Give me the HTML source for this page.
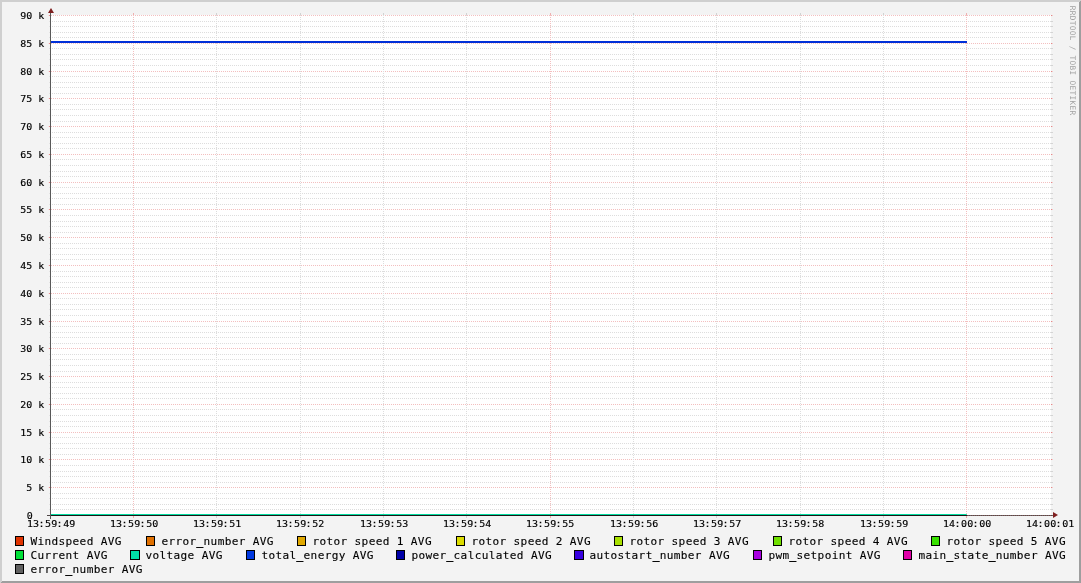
<!DOCTYPE html>
<html><head><meta charset="utf-8"><title>RRDtool graph</title>
<style>
html,body{margin:0;padding:0;background:#f3f3f3;overflow:hidden}
svg{display:block;position:absolute;left:0;top:0;will-change:transform}
text{font-family:"DejaVu Sans Mono","Liberation Mono",monospace;fill:#000;white-space:pre;stroke:#000;stroke-width:0.12px}
.ax{font-size:9.33px;stroke-width:0.15px}
.lg{font-size:11.1px;letter-spacing:0.352px}
.us{stroke-width:0.55px}
.wm{font-size:7.7px;letter-spacing:0.364px;fill:#a0a0a0;stroke:none}
</style></head><body>
<svg width="1081" height="583" viewBox="0 0 1081 583">
<rect x="0" y="0" width="1081" height="583" fill="#f3f3f3"/>
<g shape-rendering="crispEdges">
<polygon points="0,0 1081,0 1079,2 2,2 2,581 0,583" fill="#cfcfcf"/>
<polygon points="1081,0 1081,583 0,583 2,581 1079,581 1079,2" fill="#9e9e9e"/>
<rect x="51" y="15" width="1000" height="501" fill="#ffffff"/>
<rect x="49" y="515" width="1" height="1" fill="#e88c8c"/>
<rect x="48" y="515" width="1" height="1" fill="#f1e4e4"/>
<rect x="1051" y="515" width="1" height="1" fill="#e68888"/>
<rect x="1052" y="515" width="1" height="1" fill="#f0cccc"/>
<line x1="51" y1="515.5" x2="1051" y2="515.5" stroke="#f3bfbf" stroke-width="1" stroke-dasharray="1 1"/>
<rect x="49" y="509" width="1" height="1" fill="#e2e2e2"/>
<rect x="1051" y="509" width="2" height="1" fill="#d4d4d4"/>
<line x1="52" y1="509.5" x2="1051" y2="509.5" stroke="#dddddd" stroke-width="1" stroke-dasharray="1 1"/>
<rect x="49" y="504" width="1" height="1" fill="#e2e2e2"/>
<rect x="1051" y="504" width="2" height="1" fill="#d4d4d4"/>
<line x1="52" y1="504.5" x2="1051" y2="504.5" stroke="#dddddd" stroke-width="1" stroke-dasharray="1 1"/>
<rect x="49" y="498" width="1" height="1" fill="#e2e2e2"/>
<rect x="1051" y="498" width="2" height="1" fill="#d4d4d4"/>
<line x1="52" y1="498.5" x2="1051" y2="498.5" stroke="#dddddd" stroke-width="1" stroke-dasharray="1 1"/>
<rect x="49" y="493" width="1" height="1" fill="#e2e2e2"/>
<rect x="1051" y="493" width="2" height="1" fill="#d4d4d4"/>
<line x1="52" y1="493.5" x2="1051" y2="493.5" stroke="#dddddd" stroke-width="1" stroke-dasharray="1 1"/>
<rect x="49" y="487" width="1" height="1" fill="#e88c8c"/>
<rect x="48" y="487" width="1" height="1" fill="#f1e4e4"/>
<rect x="1051" y="487" width="1" height="1" fill="#e68888"/>
<rect x="1052" y="487" width="1" height="1" fill="#f0cccc"/>
<line x1="51" y1="487.5" x2="1051" y2="487.5" stroke="#f3bfbf" stroke-width="1" stroke-dasharray="1 1"/>
<rect x="49" y="482" width="1" height="1" fill="#e2e2e2"/>
<rect x="1051" y="482" width="2" height="1" fill="#d4d4d4"/>
<line x1="52" y1="482.5" x2="1051" y2="482.5" stroke="#dddddd" stroke-width="1" stroke-dasharray="1 1"/>
<rect x="49" y="476" width="1" height="1" fill="#e2e2e2"/>
<rect x="1051" y="476" width="2" height="1" fill="#d4d4d4"/>
<line x1="52" y1="476.5" x2="1051" y2="476.5" stroke="#dddddd" stroke-width="1" stroke-dasharray="1 1"/>
<rect x="49" y="471" width="1" height="1" fill="#e2e2e2"/>
<rect x="1051" y="471" width="2" height="1" fill="#d4d4d4"/>
<line x1="52" y1="471.5" x2="1051" y2="471.5" stroke="#dddddd" stroke-width="1" stroke-dasharray="1 1"/>
<rect x="49" y="465" width="1" height="1" fill="#e2e2e2"/>
<rect x="1051" y="465" width="2" height="1" fill="#d4d4d4"/>
<line x1="52" y1="465.5" x2="1051" y2="465.5" stroke="#dddddd" stroke-width="1" stroke-dasharray="1 1"/>
<rect x="49" y="459" width="1" height="1" fill="#e88c8c"/>
<rect x="48" y="459" width="1" height="1" fill="#f1e4e4"/>
<rect x="1051" y="459" width="1" height="1" fill="#e68888"/>
<rect x="1052" y="459" width="1" height="1" fill="#f0cccc"/>
<line x1="51" y1="459.5" x2="1051" y2="459.5" stroke="#f3bfbf" stroke-width="1" stroke-dasharray="1 1"/>
<rect x="49" y="454" width="1" height="1" fill="#e2e2e2"/>
<rect x="1051" y="454" width="2" height="1" fill="#d4d4d4"/>
<line x1="52" y1="454.5" x2="1051" y2="454.5" stroke="#dddddd" stroke-width="1" stroke-dasharray="1 1"/>
<rect x="49" y="448" width="1" height="1" fill="#e2e2e2"/>
<rect x="1051" y="448" width="2" height="1" fill="#d4d4d4"/>
<line x1="52" y1="448.5" x2="1051" y2="448.5" stroke="#dddddd" stroke-width="1" stroke-dasharray="1 1"/>
<rect x="49" y="443" width="1" height="1" fill="#e2e2e2"/>
<rect x="1051" y="443" width="2" height="1" fill="#d4d4d4"/>
<line x1="52" y1="443.5" x2="1051" y2="443.5" stroke="#dddddd" stroke-width="1" stroke-dasharray="1 1"/>
<rect x="49" y="437" width="1" height="1" fill="#e2e2e2"/>
<rect x="1051" y="437" width="2" height="1" fill="#d4d4d4"/>
<line x1="52" y1="437.5" x2="1051" y2="437.5" stroke="#dddddd" stroke-width="1" stroke-dasharray="1 1"/>
<rect x="49" y="432" width="1" height="1" fill="#e88c8c"/>
<rect x="48" y="432" width="1" height="1" fill="#f1e4e4"/>
<rect x="1051" y="432" width="1" height="1" fill="#e68888"/>
<rect x="1052" y="432" width="1" height="1" fill="#f0cccc"/>
<line x1="51" y1="432.5" x2="1051" y2="432.5" stroke="#f3bfbf" stroke-width="1" stroke-dasharray="1 1"/>
<rect x="49" y="426" width="1" height="1" fill="#e2e2e2"/>
<rect x="1051" y="426" width="2" height="1" fill="#d4d4d4"/>
<line x1="52" y1="426.5" x2="1051" y2="426.5" stroke="#dddddd" stroke-width="1" stroke-dasharray="1 1"/>
<rect x="49" y="421" width="1" height="1" fill="#e2e2e2"/>
<rect x="1051" y="421" width="2" height="1" fill="#d4d4d4"/>
<line x1="52" y1="421.5" x2="1051" y2="421.5" stroke="#dddddd" stroke-width="1" stroke-dasharray="1 1"/>
<rect x="49" y="415" width="1" height="1" fill="#e2e2e2"/>
<rect x="1051" y="415" width="2" height="1" fill="#d4d4d4"/>
<line x1="52" y1="415.5" x2="1051" y2="415.5" stroke="#dddddd" stroke-width="1" stroke-dasharray="1 1"/>
<rect x="49" y="409" width="1" height="1" fill="#e2e2e2"/>
<rect x="1051" y="409" width="2" height="1" fill="#d4d4d4"/>
<line x1="52" y1="409.5" x2="1051" y2="409.5" stroke="#dddddd" stroke-width="1" stroke-dasharray="1 1"/>
<rect x="49" y="404" width="1" height="1" fill="#e88c8c"/>
<rect x="48" y="404" width="1" height="1" fill="#f1e4e4"/>
<rect x="1051" y="404" width="1" height="1" fill="#e68888"/>
<rect x="1052" y="404" width="1" height="1" fill="#f0cccc"/>
<line x1="51" y1="404.5" x2="1051" y2="404.5" stroke="#f3bfbf" stroke-width="1" stroke-dasharray="1 1"/>
<rect x="49" y="398" width="1" height="1" fill="#e2e2e2"/>
<rect x="1051" y="398" width="2" height="1" fill="#d4d4d4"/>
<line x1="52" y1="398.5" x2="1051" y2="398.5" stroke="#dddddd" stroke-width="1" stroke-dasharray="1 1"/>
<rect x="49" y="393" width="1" height="1" fill="#e2e2e2"/>
<rect x="1051" y="393" width="2" height="1" fill="#d4d4d4"/>
<line x1="52" y1="393.5" x2="1051" y2="393.5" stroke="#dddddd" stroke-width="1" stroke-dasharray="1 1"/>
<rect x="49" y="387" width="1" height="1" fill="#e2e2e2"/>
<rect x="1051" y="387" width="2" height="1" fill="#d4d4d4"/>
<line x1="52" y1="387.5" x2="1051" y2="387.5" stroke="#dddddd" stroke-width="1" stroke-dasharray="1 1"/>
<rect x="49" y="382" width="1" height="1" fill="#e2e2e2"/>
<rect x="1051" y="382" width="2" height="1" fill="#d4d4d4"/>
<line x1="52" y1="382.5" x2="1051" y2="382.5" stroke="#dddddd" stroke-width="1" stroke-dasharray="1 1"/>
<rect x="49" y="376" width="1" height="1" fill="#e88c8c"/>
<rect x="48" y="376" width="1" height="1" fill="#f1e4e4"/>
<rect x="1051" y="376" width="1" height="1" fill="#e68888"/>
<rect x="1052" y="376" width="1" height="1" fill="#f0cccc"/>
<line x1="51" y1="376.5" x2="1051" y2="376.5" stroke="#f3bfbf" stroke-width="1" stroke-dasharray="1 1"/>
<rect x="49" y="371" width="1" height="1" fill="#e2e2e2"/>
<rect x="1051" y="371" width="2" height="1" fill="#d4d4d4"/>
<line x1="52" y1="371.5" x2="1051" y2="371.5" stroke="#dddddd" stroke-width="1" stroke-dasharray="1 1"/>
<rect x="49" y="365" width="1" height="1" fill="#e2e2e2"/>
<rect x="1051" y="365" width="2" height="1" fill="#d4d4d4"/>
<line x1="52" y1="365.5" x2="1051" y2="365.5" stroke="#dddddd" stroke-width="1" stroke-dasharray="1 1"/>
<rect x="49" y="359" width="1" height="1" fill="#e2e2e2"/>
<rect x="1051" y="359" width="2" height="1" fill="#d4d4d4"/>
<line x1="52" y1="359.5" x2="1051" y2="359.5" stroke="#dddddd" stroke-width="1" stroke-dasharray="1 1"/>
<rect x="49" y="354" width="1" height="1" fill="#e2e2e2"/>
<rect x="1051" y="354" width="2" height="1" fill="#d4d4d4"/>
<line x1="52" y1="354.5" x2="1051" y2="354.5" stroke="#dddddd" stroke-width="1" stroke-dasharray="1 1"/>
<rect x="49" y="348" width="1" height="1" fill="#e88c8c"/>
<rect x="48" y="348" width="1" height="1" fill="#f1e4e4"/>
<rect x="1051" y="348" width="1" height="1" fill="#e68888"/>
<rect x="1052" y="348" width="1" height="1" fill="#f0cccc"/>
<line x1="51" y1="348.5" x2="1051" y2="348.5" stroke="#f3bfbf" stroke-width="1" stroke-dasharray="1 1"/>
<rect x="49" y="343" width="1" height="1" fill="#e2e2e2"/>
<rect x="1051" y="343" width="2" height="1" fill="#d4d4d4"/>
<line x1="52" y1="343.5" x2="1051" y2="343.5" stroke="#dddddd" stroke-width="1" stroke-dasharray="1 1"/>
<rect x="49" y="337" width="1" height="1" fill="#e2e2e2"/>
<rect x="1051" y="337" width="2" height="1" fill="#d4d4d4"/>
<line x1="52" y1="337.5" x2="1051" y2="337.5" stroke="#dddddd" stroke-width="1" stroke-dasharray="1 1"/>
<rect x="49" y="332" width="1" height="1" fill="#e2e2e2"/>
<rect x="1051" y="332" width="2" height="1" fill="#d4d4d4"/>
<line x1="52" y1="332.5" x2="1051" y2="332.5" stroke="#dddddd" stroke-width="1" stroke-dasharray="1 1"/>
<rect x="49" y="326" width="1" height="1" fill="#e2e2e2"/>
<rect x="1051" y="326" width="2" height="1" fill="#d4d4d4"/>
<line x1="52" y1="326.5" x2="1051" y2="326.5" stroke="#dddddd" stroke-width="1" stroke-dasharray="1 1"/>
<rect x="49" y="321" width="1" height="1" fill="#e88c8c"/>
<rect x="48" y="321" width="1" height="1" fill="#f1e4e4"/>
<rect x="1051" y="321" width="1" height="1" fill="#e68888"/>
<rect x="1052" y="321" width="1" height="1" fill="#f0cccc"/>
<line x1="51" y1="321.5" x2="1051" y2="321.5" stroke="#f3bfbf" stroke-width="1" stroke-dasharray="1 1"/>
<rect x="49" y="315" width="1" height="1" fill="#e2e2e2"/>
<rect x="1051" y="315" width="2" height="1" fill="#d4d4d4"/>
<line x1="52" y1="315.5" x2="1051" y2="315.5" stroke="#dddddd" stroke-width="1" stroke-dasharray="1 1"/>
<rect x="49" y="309" width="1" height="1" fill="#e2e2e2"/>
<rect x="1051" y="309" width="2" height="1" fill="#d4d4d4"/>
<line x1="52" y1="309.5" x2="1051" y2="309.5" stroke="#dddddd" stroke-width="1" stroke-dasharray="1 1"/>
<rect x="49" y="304" width="1" height="1" fill="#e2e2e2"/>
<rect x="1051" y="304" width="2" height="1" fill="#d4d4d4"/>
<line x1="52" y1="304.5" x2="1051" y2="304.5" stroke="#dddddd" stroke-width="1" stroke-dasharray="1 1"/>
<rect x="49" y="298" width="1" height="1" fill="#e2e2e2"/>
<rect x="1051" y="298" width="2" height="1" fill="#d4d4d4"/>
<line x1="52" y1="298.5" x2="1051" y2="298.5" stroke="#dddddd" stroke-width="1" stroke-dasharray="1 1"/>
<rect x="49" y="293" width="1" height="1" fill="#e88c8c"/>
<rect x="48" y="293" width="1" height="1" fill="#f1e4e4"/>
<rect x="1051" y="293" width="1" height="1" fill="#e68888"/>
<rect x="1052" y="293" width="1" height="1" fill="#f0cccc"/>
<line x1="51" y1="293.5" x2="1051" y2="293.5" stroke="#f3bfbf" stroke-width="1" stroke-dasharray="1 1"/>
<rect x="49" y="287" width="1" height="1" fill="#e2e2e2"/>
<rect x="1051" y="287" width="2" height="1" fill="#d4d4d4"/>
<line x1="52" y1="287.5" x2="1051" y2="287.5" stroke="#dddddd" stroke-width="1" stroke-dasharray="1 1"/>
<rect x="49" y="282" width="1" height="1" fill="#e2e2e2"/>
<rect x="1051" y="282" width="2" height="1" fill="#d4d4d4"/>
<line x1="52" y1="282.5" x2="1051" y2="282.5" stroke="#dddddd" stroke-width="1" stroke-dasharray="1 1"/>
<rect x="49" y="276" width="1" height="1" fill="#e2e2e2"/>
<rect x="1051" y="276" width="2" height="1" fill="#d4d4d4"/>
<line x1="52" y1="276.5" x2="1051" y2="276.5" stroke="#dddddd" stroke-width="1" stroke-dasharray="1 1"/>
<rect x="49" y="271" width="1" height="1" fill="#e2e2e2"/>
<rect x="1051" y="271" width="2" height="1" fill="#d4d4d4"/>
<line x1="52" y1="271.5" x2="1051" y2="271.5" stroke="#dddddd" stroke-width="1" stroke-dasharray="1 1"/>
<rect x="49" y="265" width="1" height="1" fill="#e88c8c"/>
<rect x="48" y="265" width="1" height="1" fill="#f1e4e4"/>
<rect x="1051" y="265" width="1" height="1" fill="#e68888"/>
<rect x="1052" y="265" width="1" height="1" fill="#f0cccc"/>
<line x1="51" y1="265.5" x2="1051" y2="265.5" stroke="#f3bfbf" stroke-width="1" stroke-dasharray="1 1"/>
<rect x="49" y="259" width="1" height="1" fill="#e2e2e2"/>
<rect x="1051" y="259" width="2" height="1" fill="#d4d4d4"/>
<line x1="52" y1="259.5" x2="1051" y2="259.5" stroke="#dddddd" stroke-width="1" stroke-dasharray="1 1"/>
<rect x="49" y="254" width="1" height="1" fill="#e2e2e2"/>
<rect x="1051" y="254" width="2" height="1" fill="#d4d4d4"/>
<line x1="52" y1="254.5" x2="1051" y2="254.5" stroke="#dddddd" stroke-width="1" stroke-dasharray="1 1"/>
<rect x="49" y="248" width="1" height="1" fill="#e2e2e2"/>
<rect x="1051" y="248" width="2" height="1" fill="#d4d4d4"/>
<line x1="52" y1="248.5" x2="1051" y2="248.5" stroke="#dddddd" stroke-width="1" stroke-dasharray="1 1"/>
<rect x="49" y="243" width="1" height="1" fill="#e2e2e2"/>
<rect x="1051" y="243" width="2" height="1" fill="#d4d4d4"/>
<line x1="52" y1="243.5" x2="1051" y2="243.5" stroke="#dddddd" stroke-width="1" stroke-dasharray="1 1"/>
<rect x="49" y="237" width="1" height="1" fill="#e88c8c"/>
<rect x="48" y="237" width="1" height="1" fill="#f1e4e4"/>
<rect x="1051" y="237" width="1" height="1" fill="#e68888"/>
<rect x="1052" y="237" width="1" height="1" fill="#f0cccc"/>
<line x1="51" y1="237.5" x2="1051" y2="237.5" stroke="#f3bfbf" stroke-width="1" stroke-dasharray="1 1"/>
<rect x="49" y="232" width="1" height="1" fill="#e2e2e2"/>
<rect x="1051" y="232" width="2" height="1" fill="#d4d4d4"/>
<line x1="52" y1="232.5" x2="1051" y2="232.5" stroke="#dddddd" stroke-width="1" stroke-dasharray="1 1"/>
<rect x="49" y="226" width="1" height="1" fill="#e2e2e2"/>
<rect x="1051" y="226" width="2" height="1" fill="#d4d4d4"/>
<line x1="52" y1="226.5" x2="1051" y2="226.5" stroke="#dddddd" stroke-width="1" stroke-dasharray="1 1"/>
<rect x="49" y="221" width="1" height="1" fill="#e2e2e2"/>
<rect x="1051" y="221" width="2" height="1" fill="#d4d4d4"/>
<line x1="52" y1="221.5" x2="1051" y2="221.5" stroke="#dddddd" stroke-width="1" stroke-dasharray="1 1"/>
<rect x="49" y="215" width="1" height="1" fill="#e2e2e2"/>
<rect x="1051" y="215" width="2" height="1" fill="#d4d4d4"/>
<line x1="52" y1="215.5" x2="1051" y2="215.5" stroke="#dddddd" stroke-width="1" stroke-dasharray="1 1"/>
<rect x="49" y="209" width="1" height="1" fill="#e88c8c"/>
<rect x="48" y="209" width="1" height="1" fill="#f1e4e4"/>
<rect x="1051" y="209" width="1" height="1" fill="#e68888"/>
<rect x="1052" y="209" width="1" height="1" fill="#f0cccc"/>
<line x1="51" y1="209.5" x2="1051" y2="209.5" stroke="#f3bfbf" stroke-width="1" stroke-dasharray="1 1"/>
<rect x="49" y="204" width="1" height="1" fill="#e2e2e2"/>
<rect x="1051" y="204" width="2" height="1" fill="#d4d4d4"/>
<line x1="52" y1="204.5" x2="1051" y2="204.5" stroke="#dddddd" stroke-width="1" stroke-dasharray="1 1"/>
<rect x="49" y="198" width="1" height="1" fill="#e2e2e2"/>
<rect x="1051" y="198" width="2" height="1" fill="#d4d4d4"/>
<line x1="52" y1="198.5" x2="1051" y2="198.5" stroke="#dddddd" stroke-width="1" stroke-dasharray="1 1"/>
<rect x="49" y="193" width="1" height="1" fill="#e2e2e2"/>
<rect x="1051" y="193" width="2" height="1" fill="#d4d4d4"/>
<line x1="52" y1="193.5" x2="1051" y2="193.5" stroke="#dddddd" stroke-width="1" stroke-dasharray="1 1"/>
<rect x="49" y="187" width="1" height="1" fill="#e2e2e2"/>
<rect x="1051" y="187" width="2" height="1" fill="#d4d4d4"/>
<line x1="52" y1="187.5" x2="1051" y2="187.5" stroke="#dddddd" stroke-width="1" stroke-dasharray="1 1"/>
<rect x="49" y="182" width="1" height="1" fill="#e88c8c"/>
<rect x="48" y="182" width="1" height="1" fill="#f1e4e4"/>
<rect x="1051" y="182" width="1" height="1" fill="#e68888"/>
<rect x="1052" y="182" width="1" height="1" fill="#f0cccc"/>
<line x1="51" y1="182.5" x2="1051" y2="182.5" stroke="#f3bfbf" stroke-width="1" stroke-dasharray="1 1"/>
<rect x="49" y="176" width="1" height="1" fill="#e2e2e2"/>
<rect x="1051" y="176" width="2" height="1" fill="#d4d4d4"/>
<line x1="52" y1="176.5" x2="1051" y2="176.5" stroke="#dddddd" stroke-width="1" stroke-dasharray="1 1"/>
<rect x="49" y="171" width="1" height="1" fill="#e2e2e2"/>
<rect x="1051" y="171" width="2" height="1" fill="#d4d4d4"/>
<line x1="52" y1="171.5" x2="1051" y2="171.5" stroke="#dddddd" stroke-width="1" stroke-dasharray="1 1"/>
<rect x="49" y="165" width="1" height="1" fill="#e2e2e2"/>
<rect x="1051" y="165" width="2" height="1" fill="#d4d4d4"/>
<line x1="52" y1="165.5" x2="1051" y2="165.5" stroke="#dddddd" stroke-width="1" stroke-dasharray="1 1"/>
<rect x="49" y="159" width="1" height="1" fill="#e2e2e2"/>
<rect x="1051" y="159" width="2" height="1" fill="#d4d4d4"/>
<line x1="52" y1="159.5" x2="1051" y2="159.5" stroke="#dddddd" stroke-width="1" stroke-dasharray="1 1"/>
<rect x="49" y="154" width="1" height="1" fill="#e88c8c"/>
<rect x="48" y="154" width="1" height="1" fill="#f1e4e4"/>
<rect x="1051" y="154" width="1" height="1" fill="#e68888"/>
<rect x="1052" y="154" width="1" height="1" fill="#f0cccc"/>
<line x1="51" y1="154.5" x2="1051" y2="154.5" stroke="#f3bfbf" stroke-width="1" stroke-dasharray="1 1"/>
<rect x="49" y="148" width="1" height="1" fill="#e2e2e2"/>
<rect x="1051" y="148" width="2" height="1" fill="#d4d4d4"/>
<line x1="52" y1="148.5" x2="1051" y2="148.5" stroke="#dddddd" stroke-width="1" stroke-dasharray="1 1"/>
<rect x="49" y="143" width="1" height="1" fill="#e2e2e2"/>
<rect x="1051" y="143" width="2" height="1" fill="#d4d4d4"/>
<line x1="52" y1="143.5" x2="1051" y2="143.5" stroke="#dddddd" stroke-width="1" stroke-dasharray="1 1"/>
<rect x="49" y="137" width="1" height="1" fill="#e2e2e2"/>
<rect x="1051" y="137" width="2" height="1" fill="#d4d4d4"/>
<line x1="52" y1="137.5" x2="1051" y2="137.5" stroke="#dddddd" stroke-width="1" stroke-dasharray="1 1"/>
<rect x="49" y="132" width="1" height="1" fill="#e2e2e2"/>
<rect x="1051" y="132" width="2" height="1" fill="#d4d4d4"/>
<line x1="52" y1="132.5" x2="1051" y2="132.5" stroke="#dddddd" stroke-width="1" stroke-dasharray="1 1"/>
<rect x="49" y="126" width="1" height="1" fill="#e88c8c"/>
<rect x="48" y="126" width="1" height="1" fill="#f1e4e4"/>
<rect x="1051" y="126" width="1" height="1" fill="#e68888"/>
<rect x="1052" y="126" width="1" height="1" fill="#f0cccc"/>
<line x1="51" y1="126.5" x2="1051" y2="126.5" stroke="#f3bfbf" stroke-width="1" stroke-dasharray="1 1"/>
<rect x="49" y="121" width="1" height="1" fill="#e2e2e2"/>
<rect x="1051" y="121" width="2" height="1" fill="#d4d4d4"/>
<line x1="52" y1="121.5" x2="1051" y2="121.5" stroke="#dddddd" stroke-width="1" stroke-dasharray="1 1"/>
<rect x="49" y="115" width="1" height="1" fill="#e2e2e2"/>
<rect x="1051" y="115" width="2" height="1" fill="#d4d4d4"/>
<line x1="52" y1="115.5" x2="1051" y2="115.5" stroke="#dddddd" stroke-width="1" stroke-dasharray="1 1"/>
<rect x="49" y="109" width="1" height="1" fill="#e2e2e2"/>
<rect x="1051" y="109" width="2" height="1" fill="#d4d4d4"/>
<line x1="52" y1="109.5" x2="1051" y2="109.5" stroke="#dddddd" stroke-width="1" stroke-dasharray="1 1"/>
<rect x="49" y="104" width="1" height="1" fill="#e2e2e2"/>
<rect x="1051" y="104" width="2" height="1" fill="#d4d4d4"/>
<line x1="52" y1="104.5" x2="1051" y2="104.5" stroke="#dddddd" stroke-width="1" stroke-dasharray="1 1"/>
<rect x="49" y="98" width="1" height="1" fill="#e88c8c"/>
<rect x="48" y="98" width="1" height="1" fill="#f1e4e4"/>
<rect x="1051" y="98" width="1" height="1" fill="#e68888"/>
<rect x="1052" y="98" width="1" height="1" fill="#f0cccc"/>
<line x1="51" y1="98.5" x2="1051" y2="98.5" stroke="#f3bfbf" stroke-width="1" stroke-dasharray="1 1"/>
<rect x="49" y="93" width="1" height="1" fill="#e2e2e2"/>
<rect x="1051" y="93" width="2" height="1" fill="#d4d4d4"/>
<line x1="52" y1="93.5" x2="1051" y2="93.5" stroke="#dddddd" stroke-width="1" stroke-dasharray="1 1"/>
<rect x="49" y="87" width="1" height="1" fill="#e2e2e2"/>
<rect x="1051" y="87" width="2" height="1" fill="#d4d4d4"/>
<line x1="52" y1="87.5" x2="1051" y2="87.5" stroke="#dddddd" stroke-width="1" stroke-dasharray="1 1"/>
<rect x="49" y="82" width="1" height="1" fill="#e2e2e2"/>
<rect x="1051" y="82" width="2" height="1" fill="#d4d4d4"/>
<line x1="52" y1="82.5" x2="1051" y2="82.5" stroke="#dddddd" stroke-width="1" stroke-dasharray="1 1"/>
<rect x="49" y="76" width="1" height="1" fill="#e2e2e2"/>
<rect x="1051" y="76" width="2" height="1" fill="#d4d4d4"/>
<line x1="52" y1="76.5" x2="1051" y2="76.5" stroke="#dddddd" stroke-width="1" stroke-dasharray="1 1"/>
<rect x="49" y="71" width="1" height="1" fill="#e88c8c"/>
<rect x="48" y="71" width="1" height="1" fill="#f1e4e4"/>
<rect x="1051" y="71" width="1" height="1" fill="#e68888"/>
<rect x="1052" y="71" width="1" height="1" fill="#f0cccc"/>
<line x1="51" y1="71.5" x2="1051" y2="71.5" stroke="#f3bfbf" stroke-width="1" stroke-dasharray="1 1"/>
<rect x="49" y="65" width="1" height="1" fill="#e2e2e2"/>
<rect x="1051" y="65" width="2" height="1" fill="#d4d4d4"/>
<line x1="52" y1="65.5" x2="1051" y2="65.5" stroke="#dddddd" stroke-width="1" stroke-dasharray="1 1"/>
<rect x="49" y="59" width="1" height="1" fill="#e2e2e2"/>
<rect x="1051" y="59" width="2" height="1" fill="#d4d4d4"/>
<line x1="52" y1="59.5" x2="1051" y2="59.5" stroke="#dddddd" stroke-width="1" stroke-dasharray="1 1"/>
<rect x="49" y="54" width="1" height="1" fill="#e2e2e2"/>
<rect x="1051" y="54" width="2" height="1" fill="#d4d4d4"/>
<line x1="52" y1="54.5" x2="1051" y2="54.5" stroke="#dddddd" stroke-width="1" stroke-dasharray="1 1"/>
<rect x="49" y="48" width="1" height="1" fill="#e2e2e2"/>
<rect x="1051" y="48" width="2" height="1" fill="#d4d4d4"/>
<line x1="52" y1="48.5" x2="1051" y2="48.5" stroke="#dddddd" stroke-width="1" stroke-dasharray="1 1"/>
<rect x="49" y="43" width="1" height="1" fill="#e88c8c"/>
<rect x="48" y="43" width="1" height="1" fill="#f1e4e4"/>
<rect x="1051" y="43" width="1" height="1" fill="#e68888"/>
<rect x="1052" y="43" width="1" height="1" fill="#f0cccc"/>
<line x1="51" y1="43.5" x2="1051" y2="43.5" stroke="#f3bfbf" stroke-width="1" stroke-dasharray="1 1"/>
<rect x="49" y="37" width="1" height="1" fill="#e2e2e2"/>
<rect x="1051" y="37" width="2" height="1" fill="#d4d4d4"/>
<line x1="52" y1="37.5" x2="1051" y2="37.5" stroke="#dddddd" stroke-width="1" stroke-dasharray="1 1"/>
<rect x="49" y="32" width="1" height="1" fill="#e2e2e2"/>
<rect x="1051" y="32" width="2" height="1" fill="#d4d4d4"/>
<line x1="52" y1="32.5" x2="1051" y2="32.5" stroke="#dddddd" stroke-width="1" stroke-dasharray="1 1"/>
<rect x="49" y="26" width="1" height="1" fill="#e2e2e2"/>
<rect x="1051" y="26" width="2" height="1" fill="#d4d4d4"/>
<line x1="52" y1="26.5" x2="1051" y2="26.5" stroke="#dddddd" stroke-width="1" stroke-dasharray="1 1"/>
<rect x="49" y="21" width="1" height="1" fill="#e2e2e2"/>
<rect x="1051" y="21" width="2" height="1" fill="#d4d4d4"/>
<line x1="52" y1="21.5" x2="1051" y2="21.5" stroke="#dddddd" stroke-width="1" stroke-dasharray="1 1"/>
<rect x="49" y="15" width="1" height="1" fill="#e88c8c"/>
<rect x="48" y="15" width="1" height="1" fill="#f1e4e4"/>
<rect x="1051" y="15" width="1" height="1" fill="#e68888"/>
<rect x="1052" y="15" width="1" height="1" fill="#f0cccc"/>
<line x1="51" y1="15.5" x2="1051" y2="15.5" stroke="#f3bfbf" stroke-width="1" stroke-dasharray="1 1"/>
<rect x="133" y="13" width="1" height="2" fill="#efb0b0"/>
<rect x="133" y="516" width="1" height="2" fill="#efa8a8"/>
<line x1="133.5" y1="15" x2="133.5" y2="516" stroke="#f3bfbf" stroke-width="1" stroke-dasharray="1 1"/>
<rect x="216" y="13" width="1" height="2" fill="#d2d2d2"/>
<rect x="216" y="516" width="1" height="2" fill="#d2d2d2"/>
<line x1="216.5" y1="15" x2="216.5" y2="516" stroke="#dddddd" stroke-width="1" stroke-dasharray="1 1"/>
<rect x="300" y="13" width="1" height="2" fill="#d2d2d2"/>
<rect x="300" y="516" width="1" height="2" fill="#d2d2d2"/>
<line x1="300.5" y1="15" x2="300.5" y2="516" stroke="#dddddd" stroke-width="1" stroke-dasharray="1 1"/>
<rect x="383" y="13" width="1" height="2" fill="#d2d2d2"/>
<rect x="383" y="516" width="1" height="2" fill="#d2d2d2"/>
<line x1="383.5" y1="15" x2="383.5" y2="516" stroke="#dddddd" stroke-width="1" stroke-dasharray="1 1"/>
<rect x="466" y="13" width="1" height="2" fill="#d2d2d2"/>
<rect x="466" y="516" width="1" height="2" fill="#d2d2d2"/>
<line x1="466.5" y1="15" x2="466.5" y2="516" stroke="#dddddd" stroke-width="1" stroke-dasharray="1 1"/>
<rect x="550" y="13" width="1" height="2" fill="#efb0b0"/>
<rect x="550" y="516" width="1" height="2" fill="#efa8a8"/>
<line x1="550.5" y1="15" x2="550.5" y2="516" stroke="#f3bfbf" stroke-width="1" stroke-dasharray="1 1"/>
<rect x="633" y="13" width="1" height="2" fill="#d2d2d2"/>
<rect x="633" y="516" width="1" height="2" fill="#d2d2d2"/>
<line x1="633.5" y1="15" x2="633.5" y2="516" stroke="#dddddd" stroke-width="1" stroke-dasharray="1 1"/>
<rect x="716" y="13" width="1" height="2" fill="#d2d2d2"/>
<rect x="716" y="516" width="1" height="2" fill="#d2d2d2"/>
<line x1="716.5" y1="15" x2="716.5" y2="516" stroke="#dddddd" stroke-width="1" stroke-dasharray="1 1"/>
<rect x="800" y="13" width="1" height="2" fill="#d2d2d2"/>
<rect x="800" y="516" width="1" height="2" fill="#d2d2d2"/>
<line x1="800.5" y1="15" x2="800.5" y2="516" stroke="#dddddd" stroke-width="1" stroke-dasharray="1 1"/>
<rect x="883" y="13" width="1" height="2" fill="#d2d2d2"/>
<rect x="883" y="516" width="1" height="2" fill="#d2d2d2"/>
<line x1="883.5" y1="15" x2="883.5" y2="516" stroke="#dddddd" stroke-width="1" stroke-dasharray="1 1"/>
<rect x="966" y="13" width="1" height="2" fill="#efb0b0"/>
<rect x="966" y="516" width="1" height="2" fill="#efa8a8"/>
<line x1="966.5" y1="15" x2="966.5" y2="516" stroke="#f3bfbf" stroke-width="1" stroke-dasharray="1 1"/>
</g>
<line x1="51" y1="42" x2="966.8" y2="42" stroke="#0000a8" stroke-width="2"/>
<line x1="51" y1="41.9" x2="966.8" y2="41.9" stroke="#0030d8" stroke-width="2"/>
<line x1="51" y1="515" x2="966.8" y2="515" stroke="#00dca0" stroke-width="2"/>
<g shape-rendering="crispEdges">
<rect x="47" y="515" width="1008" height="1" fill="#686868"/>
<line x1="51" y1="515.5" x2="1052" y2="515.5" stroke="#6c4040" stroke-width="1" stroke-dasharray="1 1"/>
<rect x="51" y="515" width="916" height="1" fill="#1c1616"/>
<rect x="47" y="515" width="3" height="1" fill="#4e4646"/>
<rect x="50" y="11" width="1" height="508" fill="#585858"/>
</g>
<polygon points="1053,512 1058,515 1053,518" fill="#7f1f1f"/>
<polygon points="48,13 51,8 54,13" fill="#7f1f1f"/>
<text class="ax" transform="translate(26.8,519) scale(1.068,1)">0</text>
<text class="ax" transform="translate(26.3,491) scale(1.068,1)">5 k</text>
<text class="ax" transform="translate(20.3,463) scale(1.068,1)">10 k</text>
<text class="ax" transform="translate(20.3,436) scale(1.068,1)">15 k</text>
<text class="ax" transform="translate(20.3,408) scale(1.068,1)">20 k</text>
<text class="ax" transform="translate(20.3,380) scale(1.068,1)">25 k</text>
<text class="ax" transform="translate(20.3,352) scale(1.068,1)">30 k</text>
<text class="ax" transform="translate(20.3,325) scale(1.068,1)">35 k</text>
<text class="ax" transform="translate(20.3,297) scale(1.068,1)">40 k</text>
<text class="ax" transform="translate(20.3,269) scale(1.068,1)">45 k</text>
<text class="ax" transform="translate(20.3,241) scale(1.068,1)">50 k</text>
<text class="ax" transform="translate(20.3,213) scale(1.068,1)">55 k</text>
<text class="ax" transform="translate(20.3,186) scale(1.068,1)">60 k</text>
<text class="ax" transform="translate(20.3,158) scale(1.068,1)">65 k</text>
<text class="ax" transform="translate(20.3,130) scale(1.068,1)">70 k</text>
<text class="ax" transform="translate(20.3,102) scale(1.068,1)">75 k</text>
<text class="ax" transform="translate(20.3,75) scale(1.068,1)">80 k</text>
<text class="ax" transform="translate(20.3,47) scale(1.068,1)">85 k</text>
<text class="ax" transform="translate(20.3,19) scale(1.068,1)">90 k</text>
<text class="ax" transform="translate(27,526.5) scale(1.075,1)">13<tspan dx="-0.6">:</tspan><tspan dx="0.6">5</tspan>9<tspan dx="-0.6">:</tspan><tspan dx="0.6">4</tspan>9</text>
<text class="ax" transform="translate(110,526.5) scale(1.075,1)">13<tspan dx="-0.6">:</tspan><tspan dx="0.6">5</tspan>9<tspan dx="-0.6">:</tspan><tspan dx="0.6">5</tspan>0</text>
<text class="ax" transform="translate(193,526.5) scale(1.075,1)">13<tspan dx="-0.6">:</tspan><tspan dx="0.6">5</tspan>9<tspan dx="-0.6">:</tspan><tspan dx="0.6">5</tspan>1</text>
<text class="ax" transform="translate(276,526.5) scale(1.075,1)">13<tspan dx="-0.6">:</tspan><tspan dx="0.6">5</tspan>9<tspan dx="-0.6">:</tspan><tspan dx="0.6">5</tspan>2</text>
<text class="ax" transform="translate(360,526.5) scale(1.075,1)">13<tspan dx="-0.6">:</tspan><tspan dx="0.6">5</tspan>9<tspan dx="-0.6">:</tspan><tspan dx="0.6">5</tspan>3</text>
<text class="ax" transform="translate(443,526.5) scale(1.075,1)">13<tspan dx="-0.6">:</tspan><tspan dx="0.6">5</tspan>9<tspan dx="-0.6">:</tspan><tspan dx="0.6">5</tspan>4</text>
<text class="ax" transform="translate(526,526.5) scale(1.075,1)">13<tspan dx="-0.6">:</tspan><tspan dx="0.6">5</tspan>9<tspan dx="-0.6">:</tspan><tspan dx="0.6">5</tspan>5</text>
<text class="ax" transform="translate(610,526.5) scale(1.075,1)">13<tspan dx="-0.6">:</tspan><tspan dx="0.6">5</tspan>9<tspan dx="-0.6">:</tspan><tspan dx="0.6">5</tspan>6</text>
<text class="ax" transform="translate(693,526.5) scale(1.075,1)">13<tspan dx="-0.6">:</tspan><tspan dx="0.6">5</tspan>9<tspan dx="-0.6">:</tspan><tspan dx="0.6">5</tspan>7</text>
<text class="ax" transform="translate(776,526.5) scale(1.075,1)">13<tspan dx="-0.6">:</tspan><tspan dx="0.6">5</tspan>9<tspan dx="-0.6">:</tspan><tspan dx="0.6">5</tspan>8</text>
<text class="ax" transform="translate(860,526.5) scale(1.075,1)">13<tspan dx="-0.6">:</tspan><tspan dx="0.6">5</tspan>9<tspan dx="-0.6">:</tspan><tspan dx="0.6">5</tspan>9</text>
<text class="ax" transform="translate(943,526.5) scale(1.075,1)">14<tspan dx="-0.6">:</tspan><tspan dx="0.6">0</tspan>0<tspan dx="-0.6">:</tspan><tspan dx="0.6">0</tspan>0</text>
<text class="ax" transform="translate(1026,526.5) scale(1.075,1)">14<tspan dx="-0.6">:</tspan><tspan dx="0.6">0</tspan>0<tspan dx="-0.6">:</tspan><tspan dx="0.6">0</tspan>1</text>
<rect x="15.5" y="536.5" width="8" height="9" fill="#e03300" stroke="#000" stroke-width="1" shape-rendering="crispEdges"/>
<text class="lg" x="30.4" y="545">Windspeed AVG</text>
<rect x="146.5" y="536.5" width="8" height="9" fill="#e07000" stroke="#000" stroke-width="1" shape-rendering="crispEdges"/>
<text class="lg" x="161.4" y="545">error<tspan class="us">_</tspan>number AVG</text>
<rect x="297.5" y="536.5" width="8" height="9" fill="#e0a800" stroke="#000" stroke-width="1" shape-rendering="crispEdges"/>
<text class="lg" x="312.4" y="545">rotor speed 1 AVG</text>
<rect x="456.5" y="536.5" width="8" height="9" fill="#dcdc00" stroke="#000" stroke-width="1" shape-rendering="crispEdges"/>
<text class="lg" x="471.4" y="545">rotor speed 2 AVG</text>
<rect x="614.5" y="536.5" width="8" height="9" fill="#a8e000" stroke="#000" stroke-width="1" shape-rendering="crispEdges"/>
<text class="lg" x="629.4" y="545">rotor speed 3 AVG</text>
<rect x="773.5" y="536.5" width="8" height="9" fill="#70e000" stroke="#000" stroke-width="1" shape-rendering="crispEdges"/>
<text class="lg" x="788.4" y="545">rotor speed 4 AVG</text>
<rect x="931.5" y="536.5" width="8" height="9" fill="#38e000" stroke="#000" stroke-width="1" shape-rendering="crispEdges"/>
<text class="lg" x="946.4" y="545">rotor speed 5 AVG</text>
<rect x="15.5" y="550.5" width="8" height="9" fill="#00e038" stroke="#000" stroke-width="1" shape-rendering="crispEdges"/>
<text class="lg" x="30.4" y="559">Current AVG</text>
<rect x="130.5" y="550.5" width="9" height="9" fill="#00e0a8" stroke="#000" stroke-width="1" shape-rendering="crispEdges"/>
<text class="lg" x="145.4" y="559">voltage AVG</text>
<rect x="246.5" y="550.5" width="8" height="9" fill="#0038e0" stroke="#000" stroke-width="1" shape-rendering="crispEdges"/>
<text class="lg" x="261.4" y="559">total<tspan class="us">_</tspan>energy AVG</text>
<rect x="396.5" y="550.5" width="8" height="9" fill="#0000a8" stroke="#000" stroke-width="1" shape-rendering="crispEdges"/>
<text class="lg" x="411.4" y="559">power<tspan class="us">_</tspan>calculated AVG</text>
<rect x="574.5" y="550.5" width="9" height="9" fill="#3800e0" stroke="#000" stroke-width="1" shape-rendering="crispEdges"/>
<text class="lg" x="589.4" y="559">autostart<tspan class="us">_</tspan>number AVG</text>
<rect x="753.5" y="550.5" width="8" height="9" fill="#a800e0" stroke="#000" stroke-width="1" shape-rendering="crispEdges"/>
<text class="lg" x="768.4" y="559">pwm<tspan class="us">_</tspan>setpoint AVG</text>
<rect x="903.5" y="550.5" width="8" height="9" fill="#e000a8" stroke="#000" stroke-width="1" shape-rendering="crispEdges"/>
<text class="lg" x="918.4" y="559">main<tspan class="us">_</tspan>state<tspan class="us">_</tspan>number AVG</text>
<rect x="15.5" y="564.5" width="8" height="9" fill="#606060" stroke="#000" stroke-width="1" shape-rendering="crispEdges"/>
<text class="lg" x="30.4" y="573">error<tspan class="us">_</tspan>number AVG</text>
<text class="wm" transform="translate(1070,5.7) rotate(90)" x="0" y="0">RRDTOOL / TOBI OETIKER</text>
</svg>
</body></html>
